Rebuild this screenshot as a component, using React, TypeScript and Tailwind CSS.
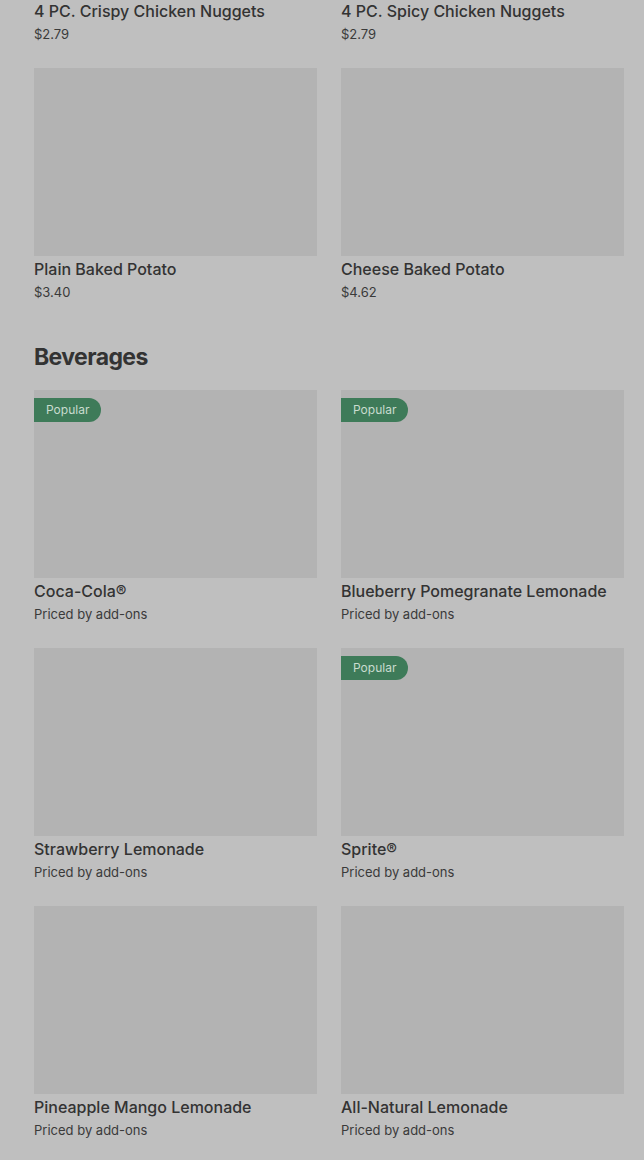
import React from 'react';

type Item = { name: string; price: string; popular?: boolean };

const sides: Item[] = [
  { name: '4 PC. Crispy Chicken Nuggets', price: '$2.79' },
  { name: '4 PC. Spicy Chicken Nuggets', price: '$2.79' },
  { name: 'Plain Baked Potato', price: '$3.40' },
  { name: 'Cheese Baked Potato', price: '$4.62' },
];

const beverages: Item[] = [
  { name: 'Coca-Cola®', price: 'Priced by add-ons', popular: true },
  { name: 'Blueberry Pomegranate Lemonade', price: 'Priced by add-ons', popular: true },
  { name: 'Strawberry Lemonade', price: 'Priced by add-ons' },
  { name: 'Sprite®', price: 'Priced by add-ons', popular: true },
  { name: 'Pineapple Mango Lemonade', price: 'Priced by add-ons' },
  { name: 'All-Natural Lemonade', price: 'Priced by add-ons' },
];

const MenuCard = ({ item }: { item: Item }) => (
  <div className="flex flex-col">
    <div className="relative h-[188px] bg-[#b3b3b3]">
      {item.popular && (
        <span className="absolute left-0 top-2 h-6 flex items-center pl-3 pr-3 rounded-r-full bg-[#3e7b59] text-[12px] text-[#c9dccf]">
          Popular
        </span>
      )}
    </div>
    <div className="mt-[3px] text-[16px] leading-5 font-medium text-[#333333]">{item.name}</div>
    <div className="mt-[3px] text-[13px] leading-5 text-[#3a3a3a]">{item.price}</div>
  </div>
);

const App = () => {
  return (
    <div
      className="w-[644px] h-[1160px] overflow-hidden bg-[#bfbfbf]"
      style={{ fontFamily: 'Inter, "Noto Sans", sans-serif' }}
    >
      <div className="-mt-[190px] pl-[34px] pr-[20px]">
        <div className="grid grid-cols-2 gap-x-6 gap-y-6">
          {sides.map((item) => (
            <MenuCard key={item.name} item={item} />
          ))}
        </div>

        <h2 className="mt-[39px] mb-[17px] text-[23px] leading-8 font-bold tracking-[-0.6px] text-[#333333]">
          Beverages
        </h2>

        <div className="grid grid-cols-2 gap-x-6 gap-y-6">
          {beverages.map((item) => (
            <MenuCard key={item.name} item={item} />
          ))}
        </div>
      </div>
    </div>
  );
};

export default App;
